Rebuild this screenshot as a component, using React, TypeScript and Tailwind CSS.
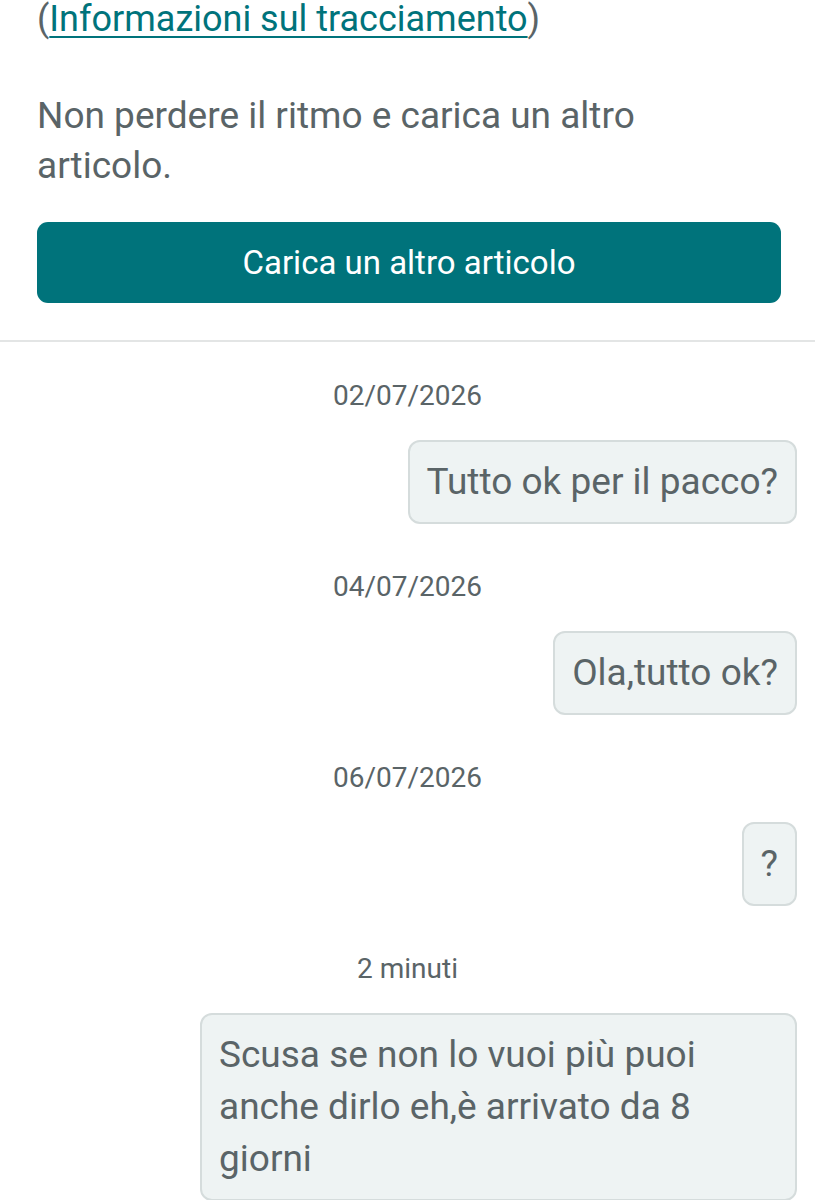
import React from "react";

const messages = [
  { date: "02/07/2026", text: "Tutto ok per il pacco?" },
  { date: "04/07/2026", text: "Ola,tutto ok?" },
  { date: "06/07/2026", text: "?" },
  { date: "2 minuti", text: "Scusa se non lo vuoi più puoi anche dirlo eh,è arrivato da 8 giorni" },
];

function Bubble({ text }: { text: string }) {
  return (
    <div className="flex justify-end pr-[18px]">
      <div className="max-w-[597px] rounded-[12px] border-2 border-[#d5dcdc] bg-[#eef3f3] px-[17px] py-[14px] text-[37px] leading-[52px] text-[#5a6467]">
        {text}
      </div>
    </div>
  );
}

export default function App() {
  return (
    <div
      className="w-full overflow-hidden bg-white"
      style={{ fontFamily: "Roboto, 'Noto Sans', sans-serif" }}
    >
      <div className="px-[37px]">
        <p className="mt-[-6px] text-[36px] leading-[50px] text-[#5a6467]">
          (
          <a className="text-[#00737b] underline decoration-2 underline-offset-[5px]">
            Informazioni sul tracciamento
          </a>
          )
        </p>
        <p className="mt-[47px] text-[37px] leading-[50px] text-[#5a6467]">
          Non perdere il ritmo e carica un altro articolo.
        </p>
        <button className="mt-[31px] flex h-[81px] w-[744px] items-center justify-center rounded-[11px] bg-[#00737b] text-[33px] text-white">
          Carica un altro articolo
        </button>
      </div>

      <div className="mt-[37px] h-[2px] w-full bg-[#e3e5e5]" />

      <div className="flex flex-col gap-[43px] pt-[34px] pb-10">
        {messages.map((m) => (
          <div key={m.date} className="flex flex-col gap-[24px]">
            <div className="text-center text-[28px] leading-[40px] text-[#5a6467]">
              {m.date}
            </div>
            <Bubble text={m.text} />
          </div>
        ))}
      </div>
    </div>
  );
}
